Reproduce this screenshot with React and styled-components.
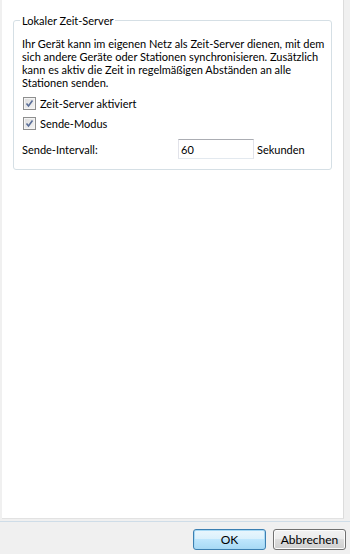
import React from 'react'
import styled, { createGlobalStyle } from 'styled-components'

const GlobalStyle = createGlobalStyle`
  html, body {
    margin: 0;
    padding: 0;
    background: #f0f0f0;
  }
  body {
    font-family: Lato, "Liberation Sans", Arial, sans-serif;
    font-size: 11px;
    color: #000;
  }
`

// window frame
const Window = styled.div`
  width: 350px;
  height: 554px;
  display: flex;
  flex-direction: column;
  background: #f0f0f0;
`

const Panel = styled.div`
  margin-left: 2px;
  width: 342px;
  height: 519px;
  background: #fff;
  border-right: 1px solid #dcdcdc;
  border-bottom: 1px solid #e2e2e2;
  box-sizing: border-box;
  padding: 0 11px;
`

const Group = styled.fieldset`
  margin: 14px 0 0 0;
  padding: 0 8px 10px 8px;
  border: 1px solid #d5dfe5;
  border-radius: 3px;
  min-width: 0;
`

const Legend = styled.legend`
  padding: 0 2px;
  margin-left: -2px;
  line-height: 13px;
`

const Info = styled.p`
  margin: 10px 0 0 0;
  line-height: 13px;
`

const Line = styled.span`
  display: block;
  white-space: nowrap;
`

const CheckRow = styled.label`
  display: flex;
  align-items: center;
  gap: 4px;
  height: 20px;
  padding-left: 1px;
  &:first-of-type {
    margin-top: 4px;
  }
`

const Box = styled.span`
  width: 11px;
  height: 11px;
  border: 1px solid #8e8f8f;
  background: linear-gradient(135deg, #dcdcdc 0%, #f4f4f4 100%);
  box-shadow: inset 0 0 0 1px #f4f4f4;
  display: flex;
  align-items: center;
  justify-content: center;
`

const FieldRow = styled.div`
  display: grid;
  grid-template-columns: 153px 76px auto;
  align-items: center;
  column-gap: 3px;
  margin-top: 6px;
  height: 20px;
`

const TextInput = styled.input`
  box-sizing: border-box;
  width: 76px;
  height: 20px;
  border: 1px solid #dbdfe6;
  border-top-color: #abadb3;
  border-left-color: #e2e3ea;
  border-right-color: #e2e3ea;
  border-bottom-color: #e3e9ef;
  padding: 0 2px;
  font: inherit;
  color: #000;
  outline: none;
`

const Footer = styled.div`
  margin-top: 2px;
  border-top: 1px solid #cfdde8;
  flex: 1;
  display: flex;
  justify-content: flex-end;
  gap: 7px;
  padding: 7px 4px 0 0;
`

const Button = styled.button`
  width: 73px;
  height: 21px;
  box-sizing: border-box;
  border-radius: 3px;
  font: inherit;
  font-size: 12px;
  color: #000;
  padding: 0;
  border: 1px solid ${p => (p.$primary ? '#3c7fb1' : '#707070')};
  background: ${p =>
    p.$primary
      ? 'linear-gradient(#eaf6fd 0%, #d9f0fc 50%, #bee6fd 50%, #a7d9f5 100%)'
      : 'linear-gradient(#f2f2f2 0%, #ebebeb 50%, #dddddd 50%, #cfcfcf 100%)'};
  box-shadow: inset 0 0 0 1px ${p => (p.$primary ? '#a7d9f5' : '#fcfcfc')};
`

const Check = () => (
  <Box>
    <svg width="9" height="9" viewBox="0 0 9 9">
      <path d="M1.5 4.5 L3.5 7 L7.5 1.5" fill="none" stroke="#5a6e98" strokeWidth="1.6" />
    </svg>
  </Box>
)

const infoLines = [
  'Ihr Gerät kann im eigenen Netz als Zeit-Server dienen, mit dem',
  'sich andere Geräte oder Stationen synchronisieren. Zusätzlich',
  'kann es aktiv die Zeit in regelmäßigen Abständen an alle',
  'Stationen senden.',
]

const App = () => {
  return (
    <Window>
      <GlobalStyle />
      <Panel>
        <Group>
          <Legend>Lokaler Zeit-Server</Legend>
          <Info>
            {infoLines.map(l => (
              <Line key={l}>{l}</Line>
            ))}
          </Info>
          <CheckRow>
            <Check />
            Zeit-Server aktiviert
          </CheckRow>
          <CheckRow>
            <Check />
            Sende-Modus
          </CheckRow>
          <FieldRow>
            <span>Sende-Intervall:</span>
            <TextInput defaultValue="60" />
            <span>Sekunden</span>
          </FieldRow>
        </Group>
      </Panel>
      <Footer>
        <Button $primary>OK</Button>
        <Button>Abbrechen</Button>
      </Footer>
    </Window>
  )
}

export default App
